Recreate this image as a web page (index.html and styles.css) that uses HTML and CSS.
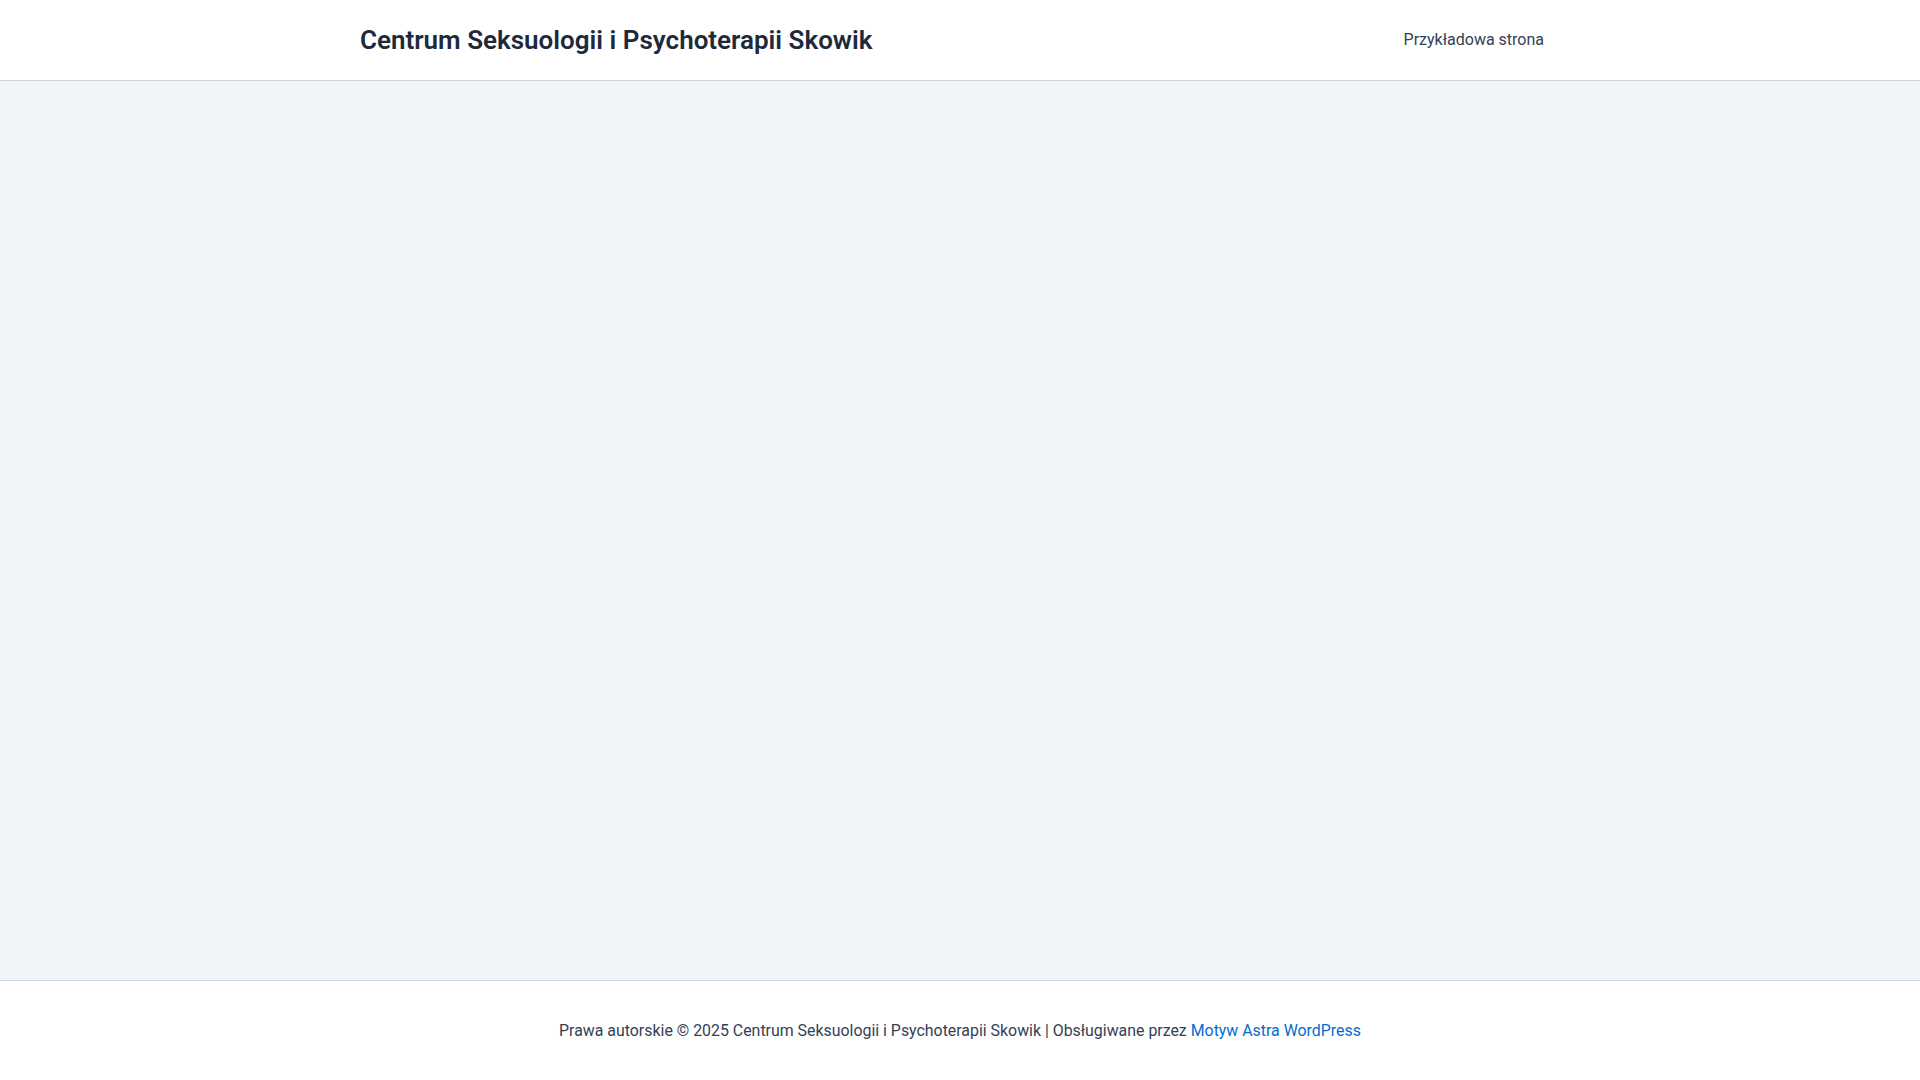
FILE: index.html
```html
<!DOCTYPE html>
<html lang="pl">
<head>
    <meta charset="UTF-8">
    <meta name="viewport" content="width=device-width, initial-scale=1.0">
    <title>Centrum Seksuologii i Psychoterapii Skowik</title>
    <link rel="stylesheet" href="styles.css">
</head>
<body>
    <header class="siteHeader">
        <div class="container headerInner">
            <a href="#" class="siteTitle">Centrum Seksuologii i Psychoterapii Skowik</a>
            <nav class="mainNav">
                <a href="#" class="menuLink">Przykładowa strona</a>
            </nav>
        </div>
    </header>

    <main class="siteContent"></main>

    <footer class="siteFooter">
        <p>Prawa autorskie © 2025 Centrum Seksuologii i Psychoterapii Skowik | Obsługiwane przez <a href="#" class="footerLink">Motyw Astra WordPress</a></p>
    </footer>
</body>
</html>
```

FILE: styles.css
```css
html, body {
    height: 100%;
}
body {
    font-family: Roboto, "Liberation Sans", sans-serif;
    font-size: 16px;
    color: #334155;
    background-color: #f0f5fa;
    margin: 0;
    padding: 0;
    display: flex;
    flex-direction: column;
}
a {
    text-decoration: none;
}
.container {
    max-width: 1200px;
    margin: 0 auto;
    padding: 0 20px;
}
.siteHeader {
    background-color: #fff;
    border-bottom: 1px solid #d1d5db;
}
.headerInner {
    height: 80px;
    display: flex;
    align-items: center;
    justify-content: space-between;
}
.siteTitle {
    font-size: 26px;
    font-weight: 600;
    color: #1e293b;
}
.menuLink {
    display: block;
    padding: 0 16px;
    color: #334155;
    line-height: 80px;
}
.siteContent {
    flex: 1;
}
.siteFooter {
    background-color: #fff;
    border-top: 1px solid #d1d5db;
    height: 99px;
    display: flex;
    align-items: center;
    justify-content: center;
}
.siteFooter p {
    margin: 0;
    font-size: 15.9px;
}
.footerLink {
    color: #046bd2;
}
```
